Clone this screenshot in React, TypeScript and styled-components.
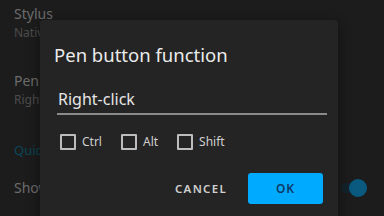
import React from "react";
import styled, { createGlobalStyle } from "styled-components";

const GlobalStyle = createGlobalStyle`
  html, body {
    margin: 0;
    padding: 0;
    background: #1c1c1c;
  }
  body {
    font-family: "Noto Sans", "Open Sans", sans-serif;
  }
`;

const Screen = styled.div`
  position: relative;
  width: 384px;
  height: 216px;
  overflow: hidden;
  background: #1c1c1c;
`;

const List = styled.div`
  display: flex;
  flex-direction: column;
  padding: 4px 17px 0 14px;
`;

const Setting = styled.div<{ $top: number }>`
  display: flex;
  align-items: center;
  justify-content: space-between;
  padding-top: ${(p) => p.$top}px;
`;

const SettingText = styled.div`
  display: flex;
  flex-direction: column;
`;

// rows that sit under the dialog are cut at its left edge
const SettingTitle = styled.div<{ $clip?: boolean }>`
  font-size: 14px;
  line-height: 20px;
  color: #6c6c6c;
  white-space: nowrap;
  overflow: hidden;
  max-width: ${(p) => (p.$clip ? "26px" : "none")};
`;

const SettingSummary = styled.div`
  font-size: 12px;
  line-height: 18px;
  color: #4c4c4c;
  white-space: nowrap;
  overflow: hidden;
  max-width: 26px;
`;

const Category = styled.div`
  font-size: 13px;
  line-height: 20px;
  color: #0b4656;
  white-space: nowrap;
  overflow: hidden;
  max-width: 26px;
`;

const Toggle = styled.div`
  position: relative;
  width: 30px;
  height: 18px;
  display: flex;
  align-items: center;
  justify-content: flex-end;
`;

const Track = styled.div`
  position: absolute;
  left: 4px;
  right: 4px;
  height: 10px;
  border-radius: 5px;
  background: #13232b;
`;

const Thumb = styled.div`
  position: relative;
  width: 18px;
  height: 18px;
  border-radius: 50%;
  background: #0a5a80;
`;

const Dialog = styled.div`
  position: absolute;
  left: 40px;
  top: 20px;
  width: 298px;
  height: 230px;
  background: #242424;
  border-radius: 4px;
  box-shadow: 0 4px 14px rgba(0, 0, 0, 0.45);
  display: flex;
  flex-direction: column;
`;

const DialogTitle = styled.div`
  padding: 22px 14px 0 14px;
  font-size: 18.5px;
  line-height: 26px;
  color: #ebebeb;
`;

const Field = styled.div`
  margin: 20px 11px 0 17px;
  padding: 0 1px 3px 1px;
  border-bottom: 2px solid #8a8a8a;
  font-size: 16px;
  line-height: 22px;
  color: #e6e6e6;
`;

const Modifiers = styled.div`
  display: flex;
  align-items: center;
  gap: 19px;
  padding: 18px 0 0 20px;
`;

const Modifier = styled.label`
  display: flex;
  align-items: center;
  gap: 6px;
  font-size: 12px;
  color: #cfcfcf;
`;

const Box = styled.span`
  width: 12px;
  height: 12px;
  border: 2px solid #bdbdbd;
  border-radius: 1px;
`;

const Actions = styled.div`
  display: flex;
  justify-content: flex-end;
  align-items: center;
  gap: 21px;
  padding: 23px 15px 0 0;
`;

const TextButton = styled.button`
  background: none;
  border: none;
  padding: 0;
  font-family: inherit;
  font-size: 11.5px;
  font-weight: 600;
  letter-spacing: 1.3px;
  color: #cfcfcf;
`;

const PrimaryButton = styled.button`
  width: 75px;
  height: 31px;
  border: none;
  border-radius: 3px;
  background: #00aaff;
  font-family: inherit;
  font-size: 12px;
  font-weight: 600;
  letter-spacing: 1px;
  color: #0c3a66;
`;

const modifiers = ["Ctrl", "Alt", "Shift"];

export default function App() {
  return (
    <Screen>
      <GlobalStyle />
      <List>
        <Setting $top={0}>
          <SettingText>
            <SettingTitle>Stylus</SettingTitle>
            <SettingSummary>Native stylus</SettingSummary>
          </SettingText>
        </Setting>
        <Setting $top={29}>
          <SettingText>
            <SettingTitle $clip>Pen button</SettingTitle>
            <SettingSummary>Right-click</SettingSummary>
          </SettingText>
        </Setting>
        <Setting $top={31}>
          <Category>Quick settings</Category>
        </Setting>
        <Setting $top={18}>
          <SettingTitle $clip>Show toolbar</SettingTitle>
          <Toggle>
            <Track />
            <Thumb />
          </Toggle>
        </Setting>
      </List>
      <Dialog>
        <DialogTitle>Pen button function</DialogTitle>
        <Field>Right-click</Field>
        <Modifiers>
          {modifiers.map((m) => (
            <Modifier key={m}>
              <Box />
              {m}
            </Modifier>
          ))}
        </Modifiers>
        <Actions>
          <TextButton>CANCEL</TextButton>
          <PrimaryButton>OK</PrimaryButton>
        </Actions>
      </Dialog>
    </Screen>
  );
}
